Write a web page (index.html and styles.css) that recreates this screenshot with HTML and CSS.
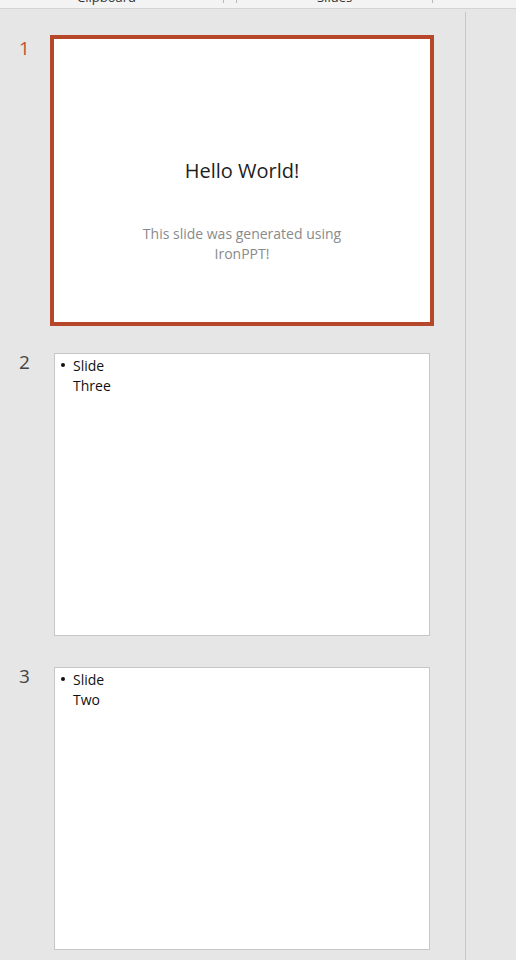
FILE: index.html
```html
<!DOCTYPE html>
<html lang="en">
<head>
  <meta charset="UTF-8" />
  <title>IronPPT - Slides</title>
  <link rel="stylesheet" href="styles.css">
</head>
<body>

  <!-- Ribbon (bottom edge only) -->
  <div class="ribbon">
    <span class="group-label clipboard">Clipboard</span>
    <span class="launcher"></span>
    <span class="group-label slides-label">Slides</span>
    <span class="ribbon-sep"></span>
  </div>

  <div class="workspace">
    <!-- Thumbnails pane -->
    <aside class="thumbs">

      <div class="thumb-row active">
        <span class="num">1</span>
        <div class="thumb">
          <div class="slide title-slide">
            <h2>Hello World!</h2>
            <p>This slide was generated using<br>IronPPT!</p>
          </div>
        </div>
      </div>

      <div class="thumb-row">
        <span class="num">2</span>
        <div class="thumb">
          <div class="slide">
            <ul>
              <li>Slide<br>Three</li>
            </ul>
          </div>
        </div>
      </div>

      <div class="thumb-row">
        <span class="num">3</span>
        <div class="thumb">
          <div class="slide">
            <ul>
              <li>Slide<br>Two</li>
            </ul>
          </div>
        </div>
      </div>

    </aside>

    <div class="divider"></div>

    <main class="editor"></main>
  </div>

</body>
</html>
```

FILE: styles.css
```css
* {
  margin: 0;
  padding: 0;
  box-sizing: border-box;
}

body {
  background: #e6e6e6;
  font-family: 'Open Sans', 'Noto Sans', sans-serif;
  color: #222;
  width: 516px;
  height: 960px;
  overflow: hidden;
}

/* Ribbon */
.ribbon {
  height: 9px;
  background: #f3f3f3;
  border-bottom: 1px solid #d4d4d4;
  display: flex;
  align-items: flex-start;
  overflow: hidden;
}

.group-label {
  font-size: 13px;
  line-height: 14px;
  margin-top: -10px;
  color: #333;
}

.clipboard {
  margin-left: 77px;
}

.launcher {
  width: 14px;
  height: 3px;
  margin-left: 87px;
  border-left: 1px solid #b9b9b9;
  border-right: 1px solid #b9b9b9;
}

.slides-label {
  margin-left: 80px;
}

.ribbon-sep {
  width: 1px;
  height: 3px;
  background: #b9b9b9;
  margin-left: 80px;
}

/* Workspace */
.workspace {
  display: flex;
  height: 951px;
}

.thumbs {
  width: 465px;
  padding-top: 26px;
  display: flex;
  flex-direction: column;
  gap: 23px;
}

.divider {
  width: 1px;
  margin-top: 3px;
  background: #c6c6c6;
}

.editor {
  flex: 1;
  background: #e6e6e6;
}

.thumb-row {
  display: flex;
}

.num {
  width: 50px;
  padding-left: 19px;
  font-size: 19px;
  line-height: 26px;
  color: #444;
}

.thumb-row.active .num {
  color: #c5502f;
}

.thumb {
  width: 384px;
  height: 291px;
  border: 4px solid transparent;
}

.thumb-row.active .thumb {
  border-color: #b7472a;
}

.slide {
  height: 100%;
  background: #fff;
  border: 1px solid #c6c6c6;
}

.thumb-row.active .slide {
  border: none;
}

.title-slide {
  text-align: center;
  padding-top: 119px;
}

.title-slide h2 {
  font-size: 20px;
  font-weight: 400;
  line-height: 26px;
  color: #1e1e1e;
}

.title-slide p {
  margin-top: 40px;
  font-size: 14px;
  line-height: 20px;
  color: #8a8a8a;
}

.slide ul {
  list-style: none;
  padding: 2px 0 0 18px;
}

.slide li {
  position: relative;
  font-size: 14px;
  line-height: 20px;
  color: #111;
}

.slide li::before {
  content: "";
  position: absolute;
  left: -12px;
  top: 7px;
  width: 4px;
  height: 4px;
  border-radius: 50%;
  background: #111;
}
```
